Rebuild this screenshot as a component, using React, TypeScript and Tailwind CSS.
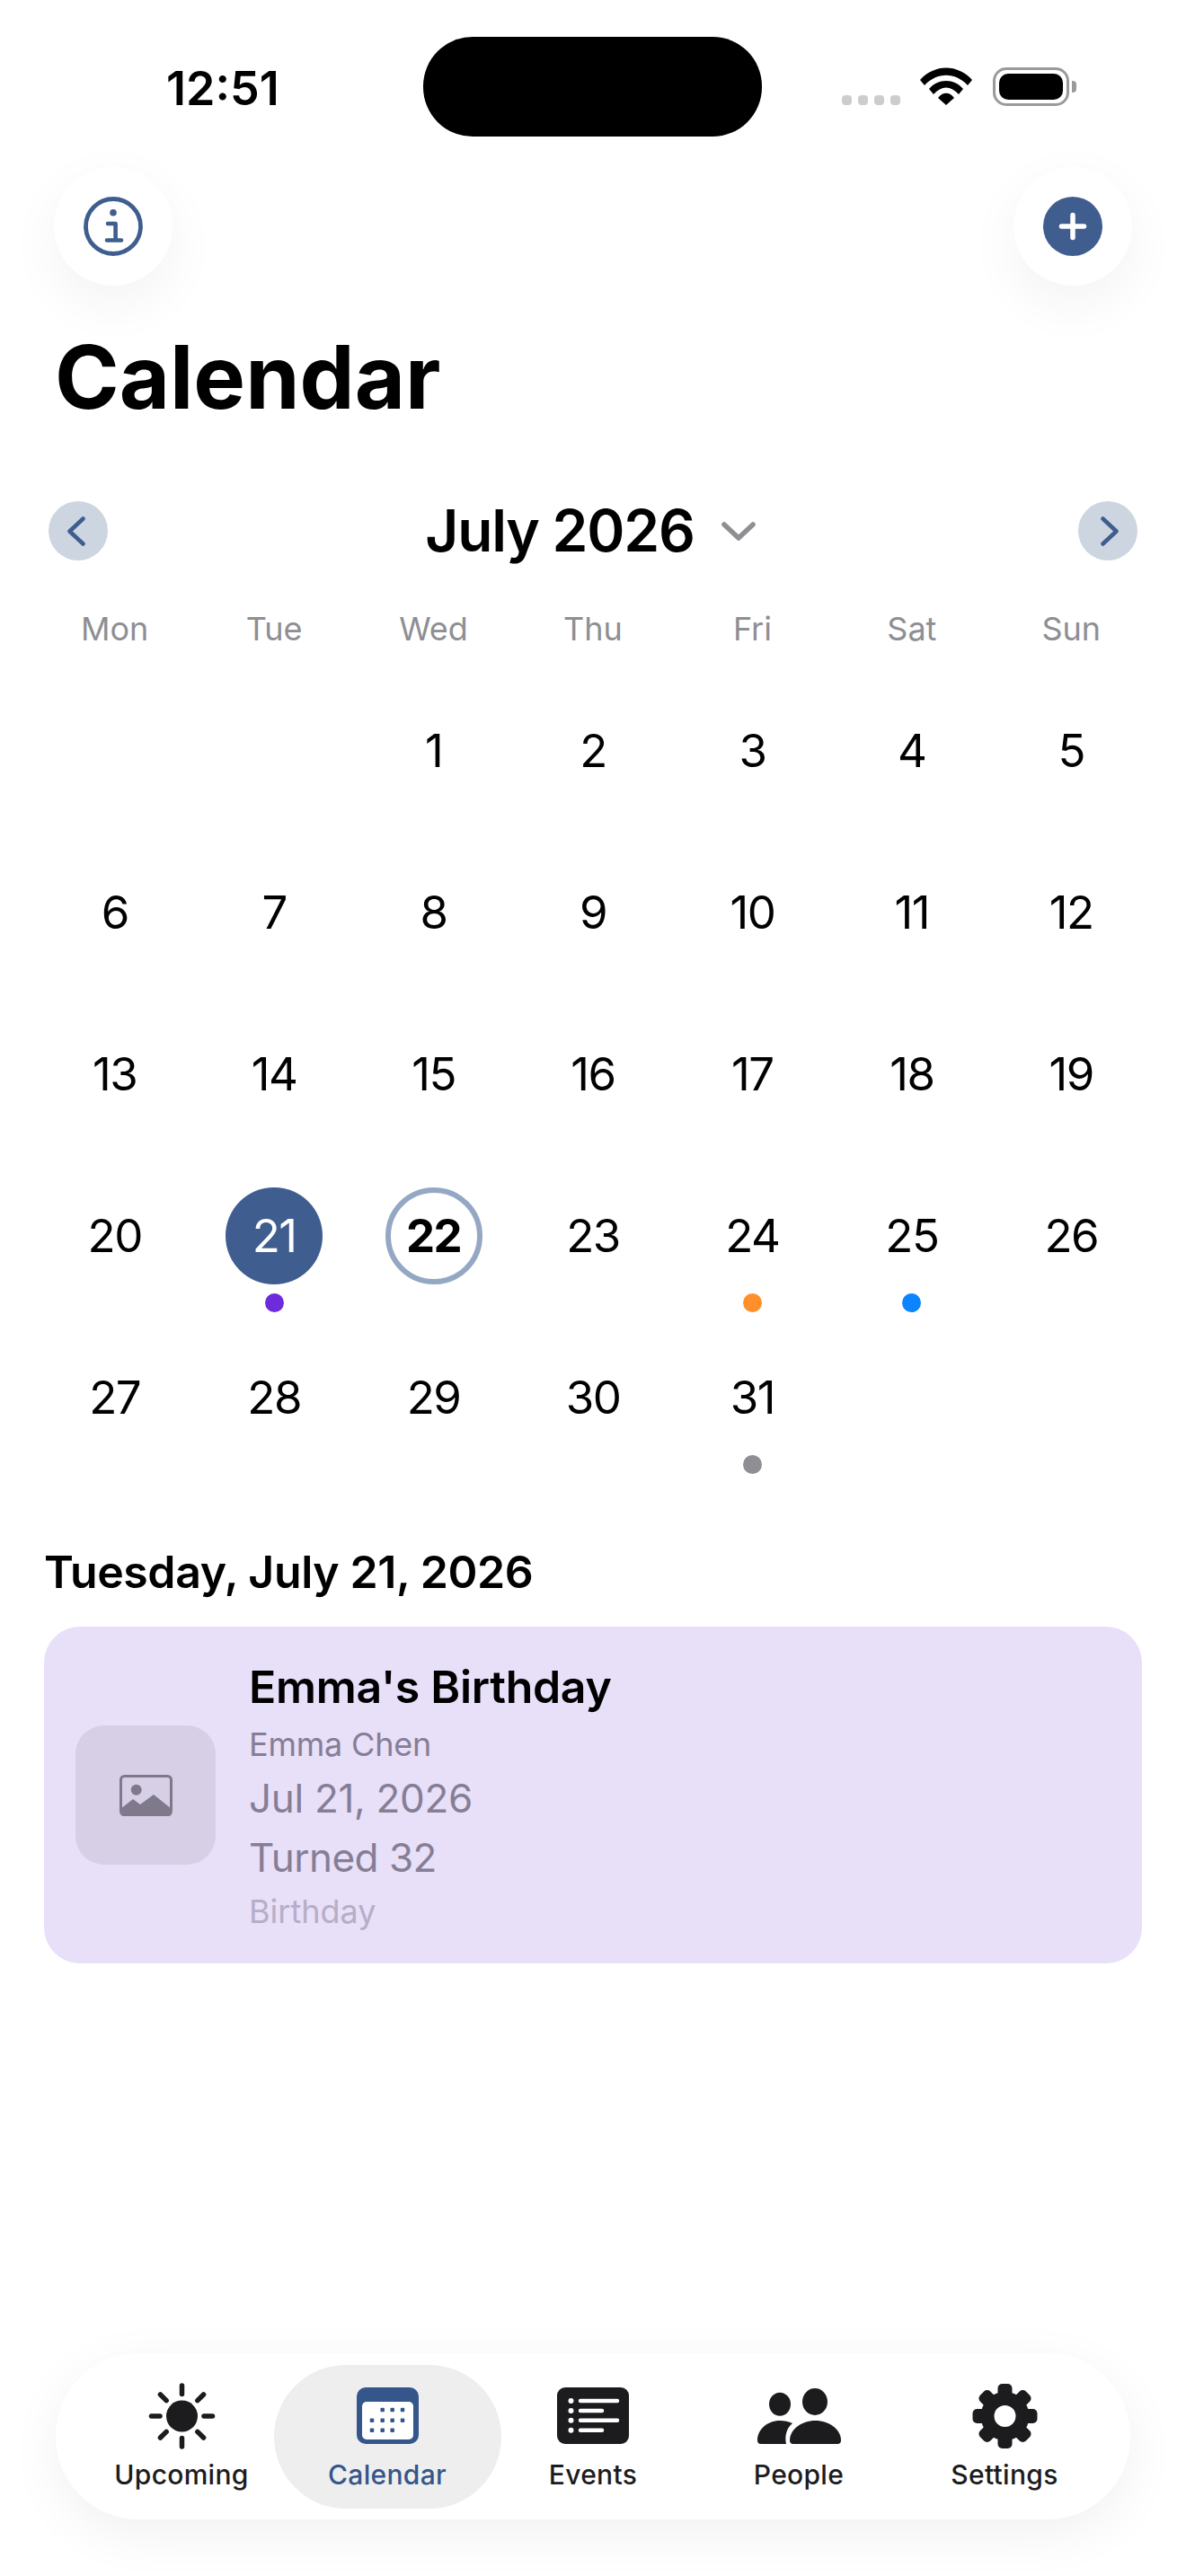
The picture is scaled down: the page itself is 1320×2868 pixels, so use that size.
const weekdays = ["Mon", "Tue", "Wed", "Thu", "Fri", "Sat", "Sun"];

const dotColors: Record<number, string> = {
  21: "bg-[#6d2bdc]",
  24: "bg-[#ff8f2b]",
  25: "bg-[#0a84ff]",
  31: "bg-[#8e8e93]",
};

const days: (number | null)[] = [null, null, ...Array.from({ length: 31 }, (_, i) => i + 1)];

function Wifi() {
  return (
    <svg width="58" height="42" viewBox="0 0 58 42" className="mb-[1px]">
      <path d="M0 14 C16 -4 42 -4 58 14 L53 20 C39 5 19 5 5 20 Z" fill="#000" />
      <path d="M10 24 C20 12 38 12 48 24 L43 30 C34 20 24 20 15 30 Z" fill="#000" />
      <path d="M20 34 C25 27 33 27 38 34 L29 42 Z" fill="#000" />
    </svg>
  );
}

function Battery() {
  return (
    <div className="flex items-center gap-[3px]">
      <div className="w-[85px] h-[43px] rounded-[15px] border-[3px] border-[#9a9a9a] p-[4px]">
        <div className="w-full h-full rounded-[10px] bg-black" />
      </div>
      <div className="w-[5px] h-[13px] rounded-r-[4px] bg-[#9a9a9a]" />
    </div>
  );
}

function StatusBar() {
  return (
    <div className="flex pt-[41px] h-[152px]">
      <div className="w-[471px] h-[111px] pl-[185px] pt-[30px] text-[52px] leading-[56px] font-semibold text-black">
        12:51
      </div>
      <div className="w-[377px] h-[111px] rounded-[55px] bg-black" />
      <div className="flex items-start pl-[89px] pt-[34px]">
        <div className="flex gap-[7px] mt-[31px]">
          <div className="w-[11px] h-[11px] rounded-[4px] bg-[#cdcdcd]" />
          <div className="w-[11px] h-[11px] rounded-[4px] bg-[#cdcdcd]" />
          <div className="w-[11px] h-[11px] rounded-[4px] bg-[#cdcdcd]" />
          <div className="w-[11px] h-[11px] rounded-[4px] bg-[#cdcdcd]" />
        </div>
        <div className="ml-[22px]">
          <Wifi />
        </div>
        <div className="ml-[23px]">
          <Battery />
        </div>
      </div>
    </div>
  );
}

function TopActions() {
  return (
    <div className="flex justify-between px-[60px] mt-[34px]">
      <button className="w-[132px] h-[132px] rounded-full bg-white shadow-[0_20px_60px_rgba(0,0,0,0.05)] flex items-center justify-center">
        <svg width="66" height="66" viewBox="0 0 66 66" fill="none" stroke="#3f5d8f">
          <circle cx="33" cy="33" r="30.5" strokeWidth="4.8" />
          <circle cx="33" cy="17.7" r="3.8" fill="#3f5d8f" stroke="none" />
          <path d="M27 30 H35.6 V48 M26 48.5 H42" strokeWidth="4.6" strokeLinecap="round" strokeLinejoin="round" />
        </svg>
      </button>
      <button className="w-[132px] h-[132px] rounded-full bg-white shadow-[0_20px_60px_rgba(0,0,0,0.05)] flex items-center justify-center">
        <svg width="66" height="66" viewBox="0 0 66 66" fill="none">
          <circle cx="33" cy="33" r="33" fill="#3f5d8f" />
          <path d="M33 20.5 V45.5 M20.5 33 H45.5" stroke="#fff" strokeWidth="5.5" strokeLinecap="round" />
        </svg>
      </button>
    </div>
  );
}

function MonthHeader() {
  return (
    <div className="flex items-center justify-between px-[54px] mt-[81px]">
      <button className="w-[66px] h-[66px] rounded-full bg-[#cdd5e1] flex items-center justify-center">
        <svg width="20" height="33" viewBox="0 0 20 33" fill="none" className="mr-[5px]">
          <path d="M17.5 2.5 L2.5 16.5 L17.5 30.5" stroke="#3f5d8f" strokeWidth="4.5" strokeLinecap="round" strokeLinejoin="round" />
        </svg>
      </button>
      <div className="flex items-center gap-[30px] mr-[6px]">
        <span className="text-[64px] leading-[76px] font-semibold tracking-[-1.2px] text-black">July 2026</span>
        <svg width="38" height="21" viewBox="0 0 38 21" fill="none">
          <path d="M3 3 L19 18 L35 3" stroke="#8e8e93" strokeWidth="5.5" strokeLinecap="round" strokeLinejoin="round" />
        </svg>
      </div>
      <button className="w-[66px] h-[66px] rounded-full bg-[#cdd5e1] flex items-center justify-center">
        <svg width="20" height="33" viewBox="0 0 20 33" fill="none" className="ml-[5px]">
          <path d="M2.5 2.5 L17.5 16.5 L2.5 30.5" stroke="#3f5d8f" strokeWidth="4.5" strokeLinecap="round" strokeLinejoin="round" />
        </svg>
      </button>
    </div>
  );
}

function DayCell({ day }: { day: number | null }) {
  if (day === null) return <div />;
  const selected = day === 21;
  const today = day === 22;
  return (
    <div className="flex flex-col items-center">
      <div
        className={`w-[108px] h-[108px] rounded-full flex items-center justify-center text-[51px] tracking-[-1.5px] ${
          selected
            ? "bg-[#3f5d8f] text-white"
            : today
              ? "border-[6px] border-[#94a7c3] font-bold text-black"
              : "text-black"
        }`}
      >
        {day}
      </div>
      {dotColors[day] && <div className={`mt-[10px] w-[21px] h-[21px] rounded-full ${dotColors[day]}`} />}
    </div>
  );
}

function CalendarGrid() {
  return (
    <div className="px-[39px]">
      <div className="grid grid-cols-7 mt-[49px]">
        {weekdays.map((d) => (
          <div key={d} className="text-center text-[36px] leading-[44px] text-[#8e8e93]">
            {d}
          </div>
        ))}
      </div>
      <div className="grid grid-cols-7 auto-rows-[180px] mt-[60px]">
        {days.map((d, i) => (
          <DayCell key={i} day={d} />
        ))}
      </div>
    </div>
  );
}

function EventCard() {
  return (
    <div className="mx-[49px] mt-[31px] h-[375px] rounded-[40px] bg-[#e8dff9] flex items-center pl-[35px]">
      <div className="w-[156px] h-[155px] rounded-[32px] bg-[#d7cfe6] flex items-center justify-center">
        <svg width="59" height="46" viewBox="0 0 59 46" fill="none">
          <rect x="1.5" y="1.5" width="56" height="43" rx="4" stroke="#7f7a8b" strokeWidth="3" />
          <circle cx="18.7" cy="16.7" r="6" fill="#7f7a8b" />
          <path d="M1 38 L15 27 L23 33 L38 22 L58 38 V42 Q58 46 54 46 H5 Q1 46 1 42 Z" fill="#7f7a8b" />
        </svg>
      </div>
      <div className="ml-[37px] flex flex-col">
        <div className="text-[50px] leading-[60px] font-semibold tracking-[-0.3px] text-black">Emma's Birthday</div>
        <div className="mt-[12px] text-[36px] leading-[44px] tracking-[-0.2px] text-[#857e95]">Emma Chen</div>
        <div className="mt-[10px] text-[44px] leading-[56px] tracking-[-0.3px] text-[#857e95]">Jul 21, 2026</div>
        <div className="mt-[10px] text-[44px] leading-[56px] tracking-[-0.5px] text-[#857e95]">Turned 32</div>
        <div className="mt-[10px] text-[36px] leading-[44px] text-[#b5aec7]">Birthday</div>
      </div>
    </div>
  );
}

function SunIcon() {
  const rays = [0, 45, 90, 135, 180, 225, 270, 315];
  return (
    <svg width="75" height="74" viewBox="0 0 75 74" fill="none">
      <circle cx="37.5" cy="37" r="17.5" fill="#1c1c1e" />
      {rays.map((r) => (
        <path
          key={r}
          d="M37.5 3 V12.5"
          stroke="#1c1c1e"
          strokeWidth="5.5"
          strokeLinecap="round"
          transform={`rotate(${r} 37.5 37)`}
        />
      ))}
    </svg>
  );
}

function CalendarIcon() {
  const dots = [
    [28.7, 25],
    [39.7, 25],
    [51, 25],
    [17, 36.7],
    [28.7, 36.7],
    [39.7, 36.7],
    [51, 36.7],
    [17, 47.7],
    [28.7, 47.7],
    [39.7, 47.7],
  ];
  return (
    <svg width="69" height="63" viewBox="0 0 69 63" fill="none">
      <rect width="69" height="63" rx="10" fill="#34568b" />
      <rect x="6" y="16" width="57" height="42" rx="5" fill="#fff" />
      {dots.map(([x, y]) => (
        <rect key={`${x}-${y}`} x={x - 2.25} y={y - 2.25} width="4.5" height="4.5" rx="1" fill="#34568b" />
      ))}
    </svg>
  );
}

function EventsIcon() {
  return (
    <svg width="80" height="63" viewBox="0 0 80 63" fill="none">
      <rect width="80" height="63" rx="9" fill="#1c1c1e" />
      <g fill="#fff">
        <circle cx="15.5" cy="15" r="3" />
        <circle cx="15.5" cy="26" r="3" />
        <circle cx="15.5" cy="36.7" r="3" />
        <circle cx="15.5" cy="47.7" r="3" />
      </g>
      <path d="M26 15 H67 M26 26 H50 M26 36.7 H67 M26 47.7 H50" stroke="#fff" strokeWidth="4.5" strokeLinecap="round" />
    </svg>
  );
}

function PeopleIcon() {
  return (
    <svg width="93" height="62" viewBox="0 0 93 62" fill="#1c1c1e">
      <ellipse cx="25" cy="17.7" rx="12" ry="13" />
      <ellipse cx="64" cy="15" rx="14" ry="15" />
      <path d="M40 62 H89 Q93 62 93 58 C93 46 80 36 64.5 36 C49 36 36 46 36 58 Q36 62 40 62 Z" />
      <path d="M4 62 H32 C30 52 33 44 39 39 C35 37 30 36 25 36 C11 36 0 46 0 58 Q0 62 4 62 Z" />
    </svg>
  );
}

function GearIcon() {
  const teeth = [0, 45, 90, 135, 180, 225, 270, 315];
  return (
    <svg width="73" height="72" viewBox="0 0 73 72" fill="#1c1c1e">
      {teeth.map((r) => (
        <rect key={r} x="28.5" y="0" width="16" height="24" rx="5" transform={`rotate(${r} 36.5 36)`} />
      ))}
      <circle cx="36.5" cy="36" r="27" />
      <circle cx="36.5" cy="36" r="12" fill="#fff" />
    </svg>
  );
}

function Tab({ label, active, children }: { label: string; active?: boolean; children: React.ReactNode }) {
  return (
    <div className="relative w-[229px] h-[160px] flex flex-col items-center">
      {active && <div className="absolute top-0 bottom-0 -left-[12px] -right-[12px] rounded-[80px] bg-[#eeeeef]" />}
      <div className="relative h-[74px] mt-[20px] flex items-center justify-center">{children}</div>
      <div
        className={`relative mt-[8px] text-[30px] leading-[40px] font-medium tracking-[0.3px] ${
          active ? "text-[#34568b]" : "text-[#1c1c1e]"
        }`}
      >
        {label}
      </div>
    </div>
  );
}

function TabBar() {
  return (
    <div className="mt-auto mb-[63px] mx-[62px] h-[185px] rounded-[92px] bg-white shadow-[0_16px_60px_rgba(0,0,0,0.06)] flex items-center justify-center">
      <Tab label="Upcoming">
        <SunIcon />
      </Tab>
      <Tab label="Calendar" active>
        <CalendarIcon />
      </Tab>
      <Tab label="Events">
        <EventsIcon />
      </Tab>
      <Tab label="People">
        <PeopleIcon />
      </Tab>
      <Tab label="Settings">
        <GearIcon />
      </Tab>
    </div>
  );
}

export default function App() {
  return (
    <div className="w-[1320px] h-[2868px] bg-white flex flex-col font-['Inter',sans-serif]">
      <StatusBar />
      <TopActions />
      <h1 className="mt-[50px] pl-[61px] text-[97px] leading-[104px] font-bold text-black">Calendar</h1>
      <MonthHeader />
      <CalendarGrid />
      <div className="mt-[38px] pl-[49px] text-[50px] leading-[60px] font-semibold tracking-[-0.4px] text-black">
        Tuesday, July 21, 2026
      </div>
      <EventCard />
      <TabBar />
    </div>
  );
}
